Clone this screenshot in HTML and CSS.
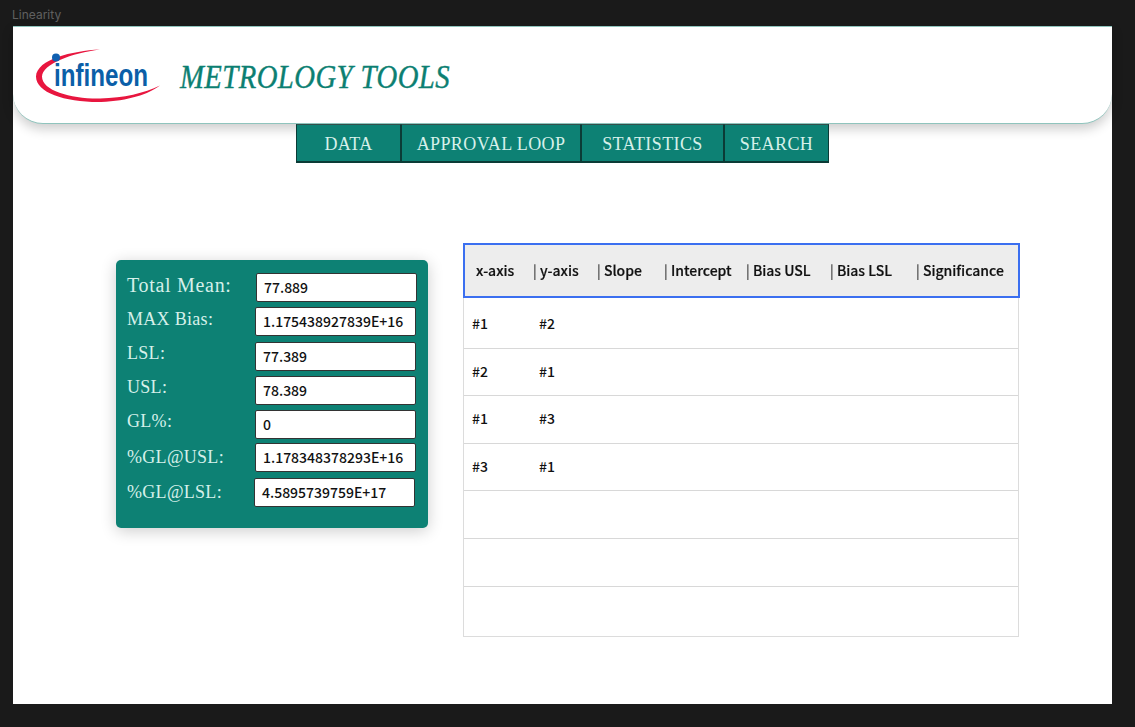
FILE: index.html
```html
<!DOCTYPE html>
<html lang="en">
<head>
<meta charset="utf-8">
<title>Linearity</title>
<link rel="stylesheet" href="styles.css">
</head>
<body>
<div class="frame-name">Linearity</div>
<div class="frame">
  <header class="header">
    <svg class="logo" width="144" height="58" viewBox="0 0 144 58" aria-label="Infineon">
      <path class="swoosh" d="M64 1.500C36 3 1 11 0 28.500C0 45 30 54.500 65 54C92 53 113 46 124 37.500C108 45 88 50 64 50.500C36 51 6 43 6 28.500C6 16 36 5 64 1.500Z"/>
      <text class="logo-text" x="18" y="37.500" textLength="94" lengthAdjust="spacingAndGlyphs">infineon</text>
      <circle class="dot" cx="20" cy="9.500" r="4"/>
    </svg>
    <h1 class="title">METROLOGY TOOLS</h1>
  </header>
  <nav class="nav">
    <a class="nav-item">DATA</a>
    <a class="nav-item">APPROVAL LOOP</a>
    <a class="nav-item">STATISTICS</a>
    <a class="nav-item">SEARCH</a>
  </nav>
  <main class="main">
    <section class="panel">
      <div class="row"><span class="label">Total Mean:</span><span class="value shift-1">77.889</span></div>
      <div class="row wide-gap"><span class="label caps">MAX Bias:</span><span class="value">1.175438927839E+16</span></div>
      <div class="row"><span class="label caps raised">LSL:</span><span class="value">77.389</span></div>
      <div class="row"><span class="label caps raised">USL:</span><span class="value">78.389</span></div>
      <div class="row narrow-gap"><span class="label caps raised">GL%:</span><span class="value">0</span></div>
      <div class="row wide-gap"><span class="label caps raised low">%GL@USL:</span><span class="value">1.178348378293E+16</span></div>
      <div class="row"><span class="label caps raised low">%GL@LSL:</span><span class="value shift-2">4.5895739759E+17</span></div>
    </section>
    <section class="table">
      <div class="thead">
        <span>x-axis</span><span><i class="pipe">|</i> y-axis</span><span><i class="pipe">|</i> Slope</span><span><i class="pipe">|</i> Intercept</span><span><i class="pipe">|</i> Bias USL</span><span><i class="pipe">|</i> Bias LSL</span><span><i class="pipe">|</i> Significance</span>
      </div>
      <div class="trow"><span>#1</span><span>#2</span></div>
      <div class="trow"><span>#2</span><span>#1</span></div>
      <div class="trow"><span>#1</span><span>#3</span></div>
      <div class="trow"><span>#3</span><span>#1</span></div>
      <div class="trow"></div>
      <div class="trow"></div>
      <div class="trow last"></div>
    </section>
  </main>
</div>
</body>
</html>
```
FILE: styles.css
```css
* { box-sizing: border-box; }
html, body { margin: 0; height: 100%; }
body {
  background: #1a1a1a;
  padding: 0 23px 23px 13px;
  overflow: hidden;
  font-family: "Noto Sans CJK SC", "Noto Sans", sans-serif;
}
.frame-name {
  height: 26px;
  padding-top: 8px;
  margin-left: -1px;
  font: 12px/13px Inter, sans-serif;
  color: #606060;
}
.frame {
  width: 1099px;
  height: 678px;
  background: #fff;
}
.header {
  height: 98px;
  display: flex;
  align-items: center;
  padding-left: 23px;
  background: #fff;
  border-top: 1px solid #8fc4bd;
  border-bottom: 1px solid #8fc4bd;
  border-radius: 0 0 30px 30px;
  box-shadow: 0 5px 12px rgba(0, 0, 0, 0.2);
}
.logo { flex: none; margin-top: 3px; }
.swoosh { fill: #e8163f; }
.dot { fill: #1060b0; }
.logo-text {
  font: bold 32px "Liberation Sans", sans-serif;
  fill: #0b5fa8;
}
.title {
  margin: 4px 0 0;
  font: italic 400 33px/40px "Liberation Serif", serif;
  letter-spacing: 0.5px;
  color: #0c7f72;
  transform: scaleX(0.87);
  transform-origin: left center;
  -webkit-text-stroke: 0.4px #0c7f72;
  white-space: nowrap;
}
.nav {
  display: grid;
  grid-template-columns: 105px 180px 143px 105px;
  justify-content: center;
  height: 39px;
}
.nav-item {
  display: flex;
  align-items: center;
  justify-content: center;
  padding-top: 2px;
  background: #0d8174;
  border: 1px solid #0b3b36;
  border-top-color: #33504c;
  border-bottom-width: 2px;
  font: 18px/1 "Liberation Serif", serif;
  letter-spacing: 0.4px;
  color: #d6f0ea;
}
.main {
  display: flex;
  align-items: flex-start;
  gap: 35px;
  padding: 80px 0 0 103px;
}
.panel {
  width: 312px;
  height: 268px;
  margin-top: 17px;
  padding: 13px 11px 0 11px;
  background: #0d8174;
  border-radius: 5px;
  box-shadow: 0 3px 16px rgba(0, 0, 0, 0.2);
}
.row {
  display: flex;
  height: 29px;
  margin-bottom: 5px;
}
.row.wide-gap { margin-bottom: 6px; }
.row.narrow-gap { margin-bottom: 4px; }
.label {
  width: 128px;
  font: 20px/24px "Liberation Serif", serif;
  letter-spacing: 0.7px;
  color: #d6f0ea;
}
.label.caps { font-size: 18px; letter-spacing: 0.3px; }
.label.raised { line-height: 22px; }
.label.low { padding-top: 3px; }
.value {
  width: 161px;
  height: 29px;
  padding-left: 7px;
  background: #fff;
  border: 1px solid #333;
  border-radius: 2px;
  font: 500 14px/27px "Noto Sans CJK SC", "Noto Sans", sans-serif;
  color: #111;
}
.shift-1 { margin-left: 1px; }
.shift-2 { margin-left: -1px; }
.table {
  width: 556px;
  height: 394px;
  border: 1px solid #dcdcdc;
  border-top: 0;
}
.thead {
  display: grid;
  grid-template-columns: 55px 64px 67px 82px 84px 86px 1fr;
  align-items: center;
  height: 55px;
  margin: 0 -2px 3px -1px;
  padding: 0 0 2px 13px;
  background: #ededed;
  border: 2px solid #3b6ff0;
  font: 500 14px/20px "Noto Sans CJK SC", "Noto Sans", sans-serif;
  -webkit-text-stroke: 0.2px #111;
  color: #111;
  white-space: nowrap;
}
.thead span { will-change: transform; }
.pipe { font-style: normal; font-weight: 400; -webkit-text-stroke: 0; }
.thead span:first-child { margin-left: -2px; }
.trow {
  display: grid;
  grid-template-columns: 67px 1fr;
  align-items: center;
  height: 47.600px;
  padding: 0 0 2.400px 8px;
  border-bottom: 1px solid #d8d8d8;
  font: 500 14px/18px "Noto Sans CJK SC", "Noto Sans", sans-serif;
  color: #111;
}
.trow.last { height: 48px; border-bottom: 0; }
```
